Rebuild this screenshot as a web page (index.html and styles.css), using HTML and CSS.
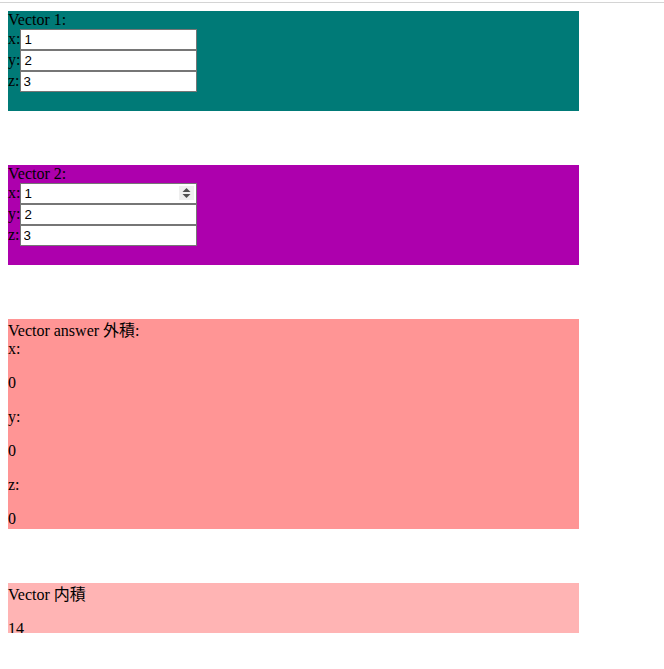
FILE: index.html
```html
<!DOCTYPE html>
<html>
<head>
<meta charset="utf-8">
<link rel="stylesheet" href="styles.css">
</head>
<body>
<div class="topline"></div>
<div class="page">
  <div class="box vec1">Vector 1:<br>x:<input class="num" type="number" value="1"><br>y:<input class="num" type="number" value="2"><br>z:<input class="num" type="number" value="3"></div>
  <div class="box vec2">Vector 2:<br>x:<span class="spinwrap"><input class="num" type="number" value="1"><span class="spinner"><svg width="15" height="14" viewBox="0 0 15 14"><rect width="15" height="14" fill="#efefef"/><path d="M3.5 6 L7.5 2 L11.5 6 Z" fill="#505050"/><path d="M3.5 8 L7.5 12 L11.5 8 Z" fill="#505050"/></svg></span></span><br>y:<input class="num" type="number" value="2"><br>z:<input class="num" type="number" value="3"></div>
  <div class="box cross"><div class="head tight">Vector answer 外積:</div>x:<p class="val">0</p>y:<p class="val">0</p>z:<p class="val">0</p></div>
  <div class="box dot"><div class="head">Vector 内積</div><p class="val">14</p></div>
</div>
</body>
</html>
```

FILE: styles.css
```css
html, body {
  margin: 0;
  padding: 0;
  background: #ffffff;
}
body {
  font-family: "Liberation Serif", "Noto Sans CJK JP", serif;
  font-size: 16px;
  color: #000;
}
.topline {
  margin-top: 2px;
  height: 1px;
  background: #d4d4d4;
}
.page {
  padding: 8px 8px 0 8px;
  display: flex;
  flex-direction: column;
  gap: 54px;
}
.box {
  width: 571px;
  line-height: 18.4px;
}
.vec1 {
  background: #007a77;
  height: 100px;
  line-height: normal;
}
.vec2 {
  background: #ad00ad;
  height: 100px;
  line-height: normal;
}
.cross {
  background: #ff9595;
  height: 210px;
  line-height: 18px;
}
.dot {
  background: #ffb4b4;
  height: 50px;
}
.head {
  padding-top: 3px;
  height: 18.4px;
}
.head.tight {
  padding-top: 2.5px;
}
.val {
  margin: 16px 0;
}
.cross .val:last-child,
.dot .val {
  margin-bottom: 0;
}
.num {
  box-sizing: border-box;
  width: 177px;
  height: 21px;
  margin: 0;
  padding: 1px 3px;
  border: 1px solid #767676;
  font-family: "Liberation Sans", Arial, sans-serif;
  font-size: 13.333px;
  color: #000;
  background: #fff;
  vertical-align: baseline;
}
.num::-webkit-inner-spin-button,
.num::-webkit-outer-spin-button {
  -webkit-appearance: none;
  margin: 0;
}
.spinwrap {
  position: relative;
  display: inline-block;
}
.spinner {
  position: absolute;
  right: 3px;
  top: 3px;
  width: 15px;
  height: 14px;
  line-height: 0;
}
```
